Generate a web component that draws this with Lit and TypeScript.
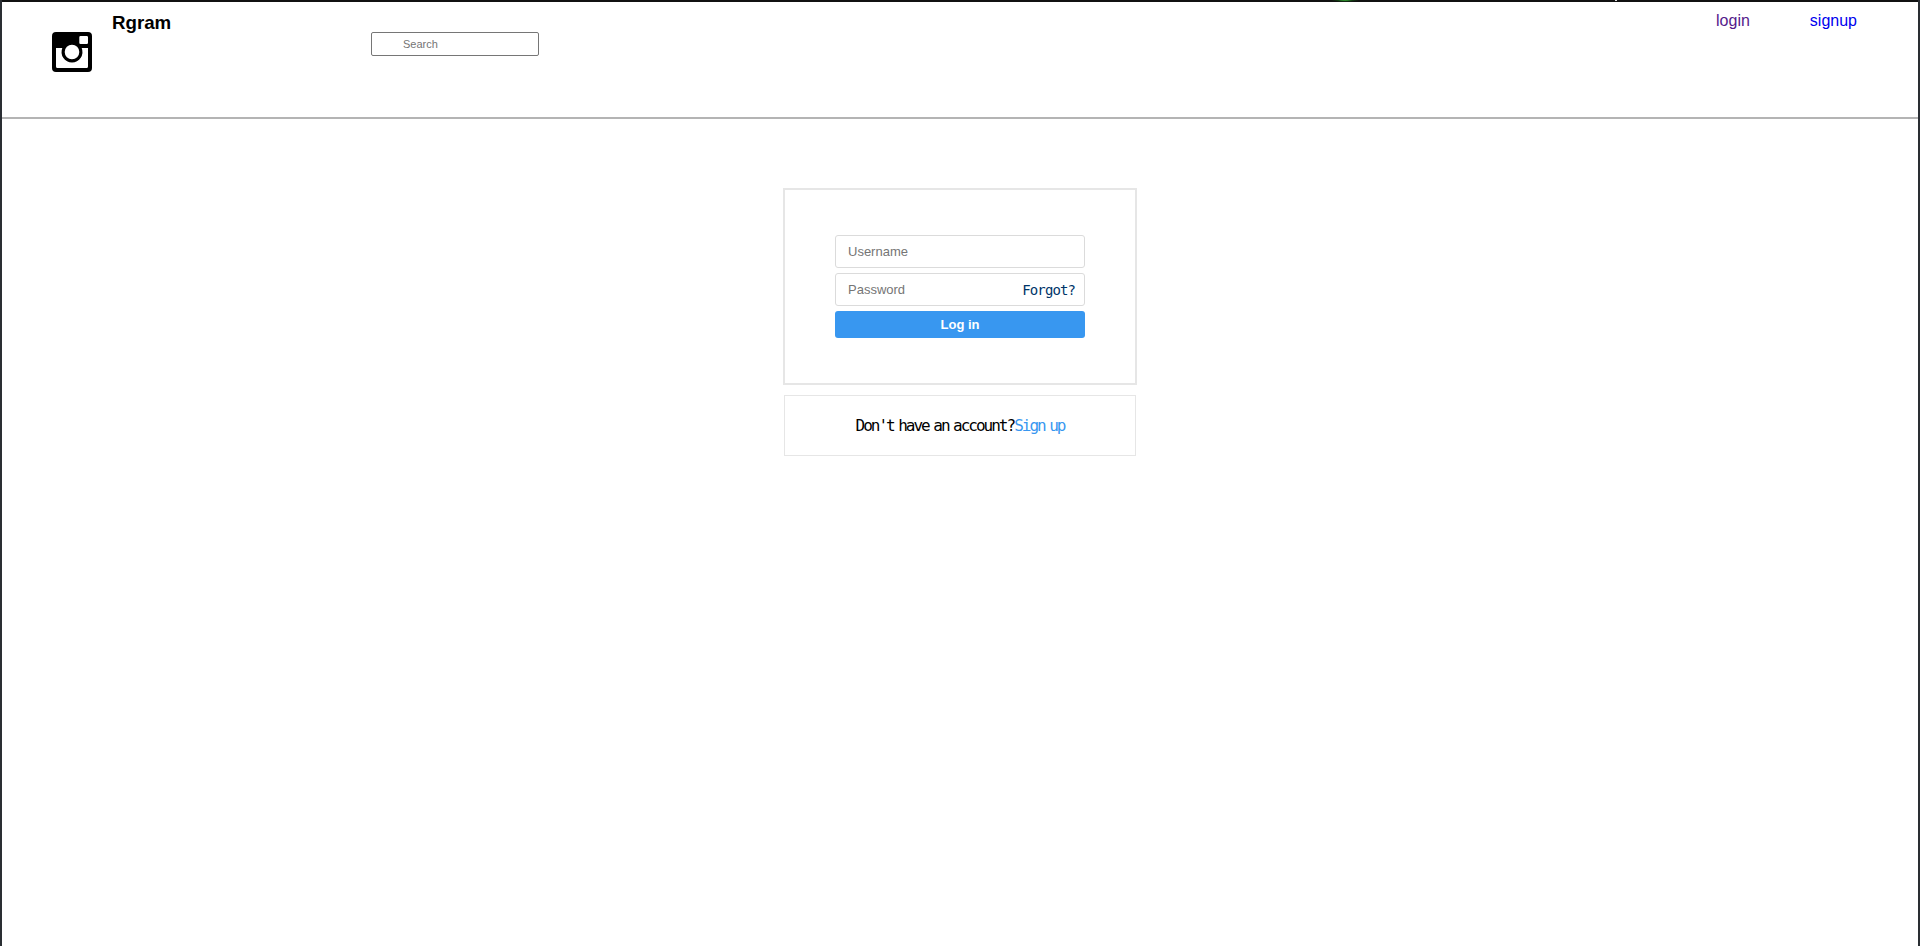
import { LitElement, html, css } from "lit";
import { customElement } from "lit/decorators.js";

@customElement("app-root")
export class AppRoot extends LitElement {
  static styles = css`
    :host { display: block; height: 946px; box-sizing: border-box; background: #fff; border-left: 2px solid #2a2e33; border-right: 2px solid #2a2e33; font-family: "Liberation Sans", Arial, sans-serif; overflow: hidden; }
    .strip { height: 2px; margin: 0 -2px; background:
      radial-gradient(ellipse 14px 2px at 1345px 0, #3fc83f, rgba(20, 90, 20, 0.6) 55%, transparent 100%) no-repeat,
      linear-gradient(#ddd, #ddd) 1615px 0 / 2px 1px no-repeat,
      #111; }
    .header { height: 115px; border-bottom: 2px solid #b4b4b4; display: flex; align-items: flex-start; box-sizing: content-box; }
    .logo { margin: 30px 0 0 50px; width: 40px; height: 40px; flex: none; display: block; }
    .brand { margin: 10px 0 0 20px; font-size: 18.72px; font-weight: 700; line-height: 22px; color: #000; width: 259px; flex: none; }
    .search { margin-top: 30px; width: 168px; height: 24px; box-sizing: border-box; border: 1px solid #767676; border-radius: 2px; padding: 0 0 0 31px; font: 11px "Liberation Sans", Arial, sans-serif; background: #fff; outline: none; }
    .search::placeholder, .field input::placeholder { color: #757575; opacity: 1; }
    .nav { margin-left: auto; display: flex; gap: 60px; padding: 10px 61px 0 0; font-size: 16px; line-height: 18px; }
    .nav a { text-decoration: none; }
    .nav .visited { color: #551a8b; }
    .nav .link { color: #0000ee; }
    .main { display: flex; flex-direction: column; align-items: center; padding-top: 69px; gap: 10px; }
    .card { width: 354px; height: 197px; box-sizing: border-box; border: 2px solid #e6e6e6; padding: 45px 50px 0; display: flex; flex-direction: column; gap: 5px; }
    .field { height: 33px; box-sizing: border-box; border: 1px solid #dbdbdb; border-radius: 3px; display: flex; align-items: center; padding: 0 9px 0 12px; }
    .field input { flex: 1; min-width: 0; border: 0; outline: none; padding: 0; font: 13px "Liberation Sans", Arial, sans-serif; background: transparent; }
    .forgot { font: 14px "DejaVu Sans Mono", monospace; letter-spacing: -0.9px; color: #003569; text-decoration: none; }
    .btn { height: 27px; border: 0; border-radius: 3px; background: #3897f0; color: #fff; font: 700 13px "Liberation Sans", Arial, sans-serif; padding: 0; }
    .alt { width: 352px; height: 61px; box-sizing: border-box; border: 1px solid #e6e6e6; display: flex; align-items: center; justify-content: center; font: 16px "DejaVu Sans Mono", monospace; letter-spacing: -2px; word-spacing: -3.1px; color: #000; }
    .alt a { color: #3897f0; text-decoration: none; }
  `;

  render() {
    return html`
      <div class="strip"></div>
      <header class="header">
        <svg class="logo" viewBox="0 0 40 40" aria-hidden="true">
          <path fill-rule="evenodd" d="M4 0h32a4 4 0 0 1 4 4v32a4 4 0 0 1-4 4H4a4 4 0 0 1-4-4V4a4 4 0 0 1 4-4ZM4 16v18.5A1.5 1.5 0 0 0 5.5 36h29a1.5 1.5 0 0 0 1.5-1.5V16h-6.3a10.5 10.5 0 1 1-19.4 0ZM20 12.7a7.3 7.3 0 1 0 0 14.6 7.3 7.3 0 0 0 0-14.6ZM28.5 4a1.2 1.2 0 0 0-1.2 1.2v5.6a1.2 1.2 0 0 0 1.2 1.2h6.3a1.2 1.2 0 0 0 1.2-1.2V5.2A1.2 1.2 0 0 0 34.8 4Z"/>
        </svg>
        <div class="brand">Rgram</div>
        <input class="search" placeholder="Search" />
        <nav class="nav"><a class="visited" href="#">login</a><a class="link" href="#">signup</a></nav>
      </header>
      <main class="main">
        <form class="card">
          <div class="field"><input placeholder="Username" /></div>
          <div class="field"><input placeholder="Password" /><a class="forgot" href="#">Forgot?</a></div>
          <button class="btn" type="button">Log in</button>
        </form>
        <div class="alt"><span>Don't have an account?</span><a href="#">Sign up</a></div>
      </main>
    `;
  }
}
